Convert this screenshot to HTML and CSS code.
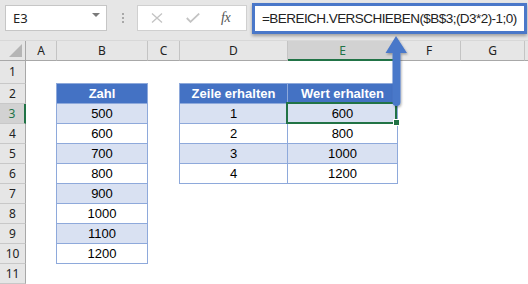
FILE: index.html
```html
<!DOCTYPE html>
<html>
<head>
<meta charset="utf-8">
<link rel="stylesheet" href="styles.css">
</head>
<body>
<div class="toolbar">
  <div class="namebox"><span class="ref">E3</span><span class="caret"></span></div>
  <div class="grip"><i></i><i></i><i></i></div>
  <div class="fxbox">
    <svg class="ico" width="12" height="10" viewBox="0 0 12 10"><path d="M1 0.5 L11 9.5 M11 0.5 L1 9.5" stroke="#c3c3c3" stroke-width="1.3" fill="none"/></svg>
    <svg class="ico chk" width="14" height="10" viewBox="0 0 14 10"><path d="M0.8 5 L4.5 8.8 L13.2 0.6" stroke="#c3c3c3" stroke-width="1.8" fill="none"/></svg>
    <span class="fx">fx</span>
  </div>
  <div class="formula">=BEREICH.VERSCHIEBEN($B$3;(D3*2)-1;0)</div>
</div>
<div class="sheet">
  <div class="colhead corner"></div><div class="colhead">A</div><div class="colhead">B</div><div class="colhead">C</div><div class="colhead">D</div><div class="colhead active">E</div><div class="colhead">F</div><div class="colhead">G</div><div class="colhead last"></div>

  <div class="rowhead tall">1</div><div></div><div></div><div></div><div></div><div></div><div></div><div></div><div></div>

  <div class="rowhead">2</div><div></div><div class="t th first">Zahl</div><div></div><div class="t th first">Zeile erhalten</div><div class="t th">Wert erhalten</div><div></div><div></div><div></div>

  <div class="rowhead active">3</div><div></div><div class="t band first">500</div><div></div><div class="t band first">1</div><div class="t band sel">600</div><div></div><div></div><div></div>

  <div class="rowhead">4</div><div></div><div class="t first">600</div><div></div><div class="t first">2</div><div class="t">800</div><div></div><div></div><div></div>

  <div class="rowhead">5</div><div></div><div class="t band first">700</div><div></div><div class="t band first">3</div><div class="t band">1000</div><div></div><div></div><div></div>

  <div class="rowhead">6</div><div></div><div class="t first">800</div><div></div><div class="t first">4</div><div class="t">1200</div><div></div><div></div><div></div>

  <div class="rowhead">7</div><div></div><div class="t band first">900</div><div></div><div></div><div></div><div></div><div></div><div></div>

  <div class="rowhead">8</div><div></div><div class="t first">1000</div><div></div><div></div><div></div><div></div><div></div><div></div>

  <div class="rowhead">9</div><div></div><div class="t band first">1100</div><div></div><div></div><div></div><div></div><div></div><div></div>

  <div class="rowhead">10</div><div></div><div class="t first">1200</div><div></div><div></div><div></div><div></div><div></div><div></div>

  <div class="rowhead">11</div><div></div><div></div><div></div><div></div><div></div><div></div><div></div><div></div>
</div>
<svg class="arrow" width="40" height="84" viewBox="0 0 40 84">
  <defs>
    <filter id="sh" x="-30%" y="-10%" width="160%" height="130%">
      <feDropShadow dx="1" dy="1.5" stdDeviation="1.2" flood-color="#000" flood-opacity="0.3"/>
    </filter>
  </defs>
  <path d="M16 5 L27 22 L20.5 22 L20.5 71 A4 4 0 0 1 12.5 71 L12.5 22 L5.5 22 Z" fill="#4a78c9" filter="url(#sh)"/>
</svg>
</body>
</html>
```
FILE: styles.css
```css
html, body {
  margin: 0;
  padding: 0;
  background: #ffffff;
}
body {
  position: relative;
  width: 528px;
  height: 284px;
  overflow: hidden;
  font-family: "Noto Sans", "Open Sans", sans-serif;
}
.toolbar {
  height: 40px;
  border-bottom: 1px solid #d8d8d8;
  background: #e6e6e6;
  display: flex;
  align-items: flex-start;
  padding-left: 5px;
  box-sizing: content-box;
}
.namebox {
  margin-top: 5px;
  width: 102px;
  height: 26px;
  box-sizing: border-box;
  background: #fff;
  border: 1px solid #c6c6c6;
  display: flex;
  align-items: center;
  justify-content: space-between;
  padding: 0 6px 0 7px;
}
.ref {
  font-size: 13px;
  color: #222;
  line-height: 1;
}
.caret {
  width: 0;
  height: 0;
  border-left: 4px solid transparent;
  border-right: 4px solid transparent;
  border-top: 4px solid #7a7a7a;
  margin-top: -6px;
}
.grip {
  margin: 13px 0 0 15px;
  width: 2px;
  display: flex;
  flex-direction: column;
  gap: 2px;
}
.grip i {
  display: block;
  width: 2px;
  height: 2px;
  background: #a8a8a8;
}
.fxbox {
  margin: 5px 0 0 13px;
  width: 110px;
  height: 26px;
  box-sizing: border-box;
  background: #fff;
  border: 1px solid #d0d0d0;
  display: flex;
  align-items: center;
  padding-left: 13px;
}
.ico {
  display: block;
}
.chk {
  margin-left: 23px;
}
.fx {
  margin-left: 21px;
  font-family: "Liberation Serif", serif;
  font-style: italic;
  font-size: 14px;
  color: #555;
  letter-spacing: -0.5px;
}
.formula {
  margin: 3px 0 0 5px;
  width: 275px;
  height: 31px;
  box-sizing: border-box;
  background: #fff;
  border: 3px solid #4a78c9;
  box-shadow: 0 2px 3px rgba(0, 0, 0, 0.3);
  font-family: "Liberation Sans", Arial, sans-serif;
  font-size: 13.5px;
  letter-spacing: -0.55px;
  color: #222;
  line-height: 25px;
  padding-left: 7px;
  white-space: nowrap;
  overflow: hidden;
}
.sheet {
  display: grid;
  grid-template-columns: 26px 31px 91px 32px 108px 110px 63px 64px 1fr;
  grid-template-rows: 20px 23px repeat(10, 20px);
}
.sheet > div {
  box-sizing: border-box;
}
.colhead {
  background: #e6e6e6;
  border-right: 1px solid #c4c4c4;
  border-bottom: 1px solid #a8a8a8;
  font-size: 12px;
  color: #222;
  text-align: center;
  line-height: 19px;
}
.colhead.last {
  border-right: none;
}
.colhead.active {
  background: #d2d2d2;
  color: #217346;
  border-bottom: 2px solid #217346;
}
.corner {
  position: relative;
  border-right-color: #a8a8a8;
}
.corner::after {
  content: "";
  position: absolute;
  right: 3px;
  bottom: 3px;
  width: 0;
  height: 0;
  border-left: 13px solid transparent;
  border-bottom: 13px solid #b5b5b5;
}
.rowhead {
  background: #e6e6e6;
  border-right: 1px solid #a8a8a8;
  border-bottom: 1px solid #c8c8c8;
  font-size: 12px;
  color: #222;
  text-align: center;
  line-height: 19px;
}
.rowhead.tall {
  line-height: 22px;
}
.rowhead.active {
  background: #d2d2d2;
  color: #217346;
  border-right: 2px solid #217346;
}
.t {
  border-right: 1px solid #8ea9db;
  border-bottom: 1px solid #8ea9db;
  font-family: "Liberation Sans", Arial, sans-serif;
  font-size: 13px;
  color: #000;
  text-align: center;
  line-height: 20px;
}
.t.first {
  box-shadow: -1px 0 0 #8ea9db;
}
.th {
  background: #4472c4;
  color: #fff;
  font-weight: bold;
  box-shadow: 0 -1px 0 #8ea9db;
}
.th.first {
  box-shadow: -1px 0 0 #8ea9db, 0 -1px 0 #8ea9db, -1px -1px 0 #8ea9db;
}
.band {
  background: #d9e1f2;
}
.sel {
  position: relative;
}
.sel::after {
  content: "";
  position: absolute;
  left: -2px;
  top: -2px;
  right: 0;
  bottom: -1px;
  border: 2px solid #217346;
}
.sel::before {
  content: "";
  position: absolute;
  right: -3px;
  bottom: -3px;
  width: 5px;
  height: 5px;
  background: #217346;
  border: 1px solid #fff;
  z-index: 2;
}
.arrow {
  position: absolute;
  left: 380px;
  top: 31px;
}
```
